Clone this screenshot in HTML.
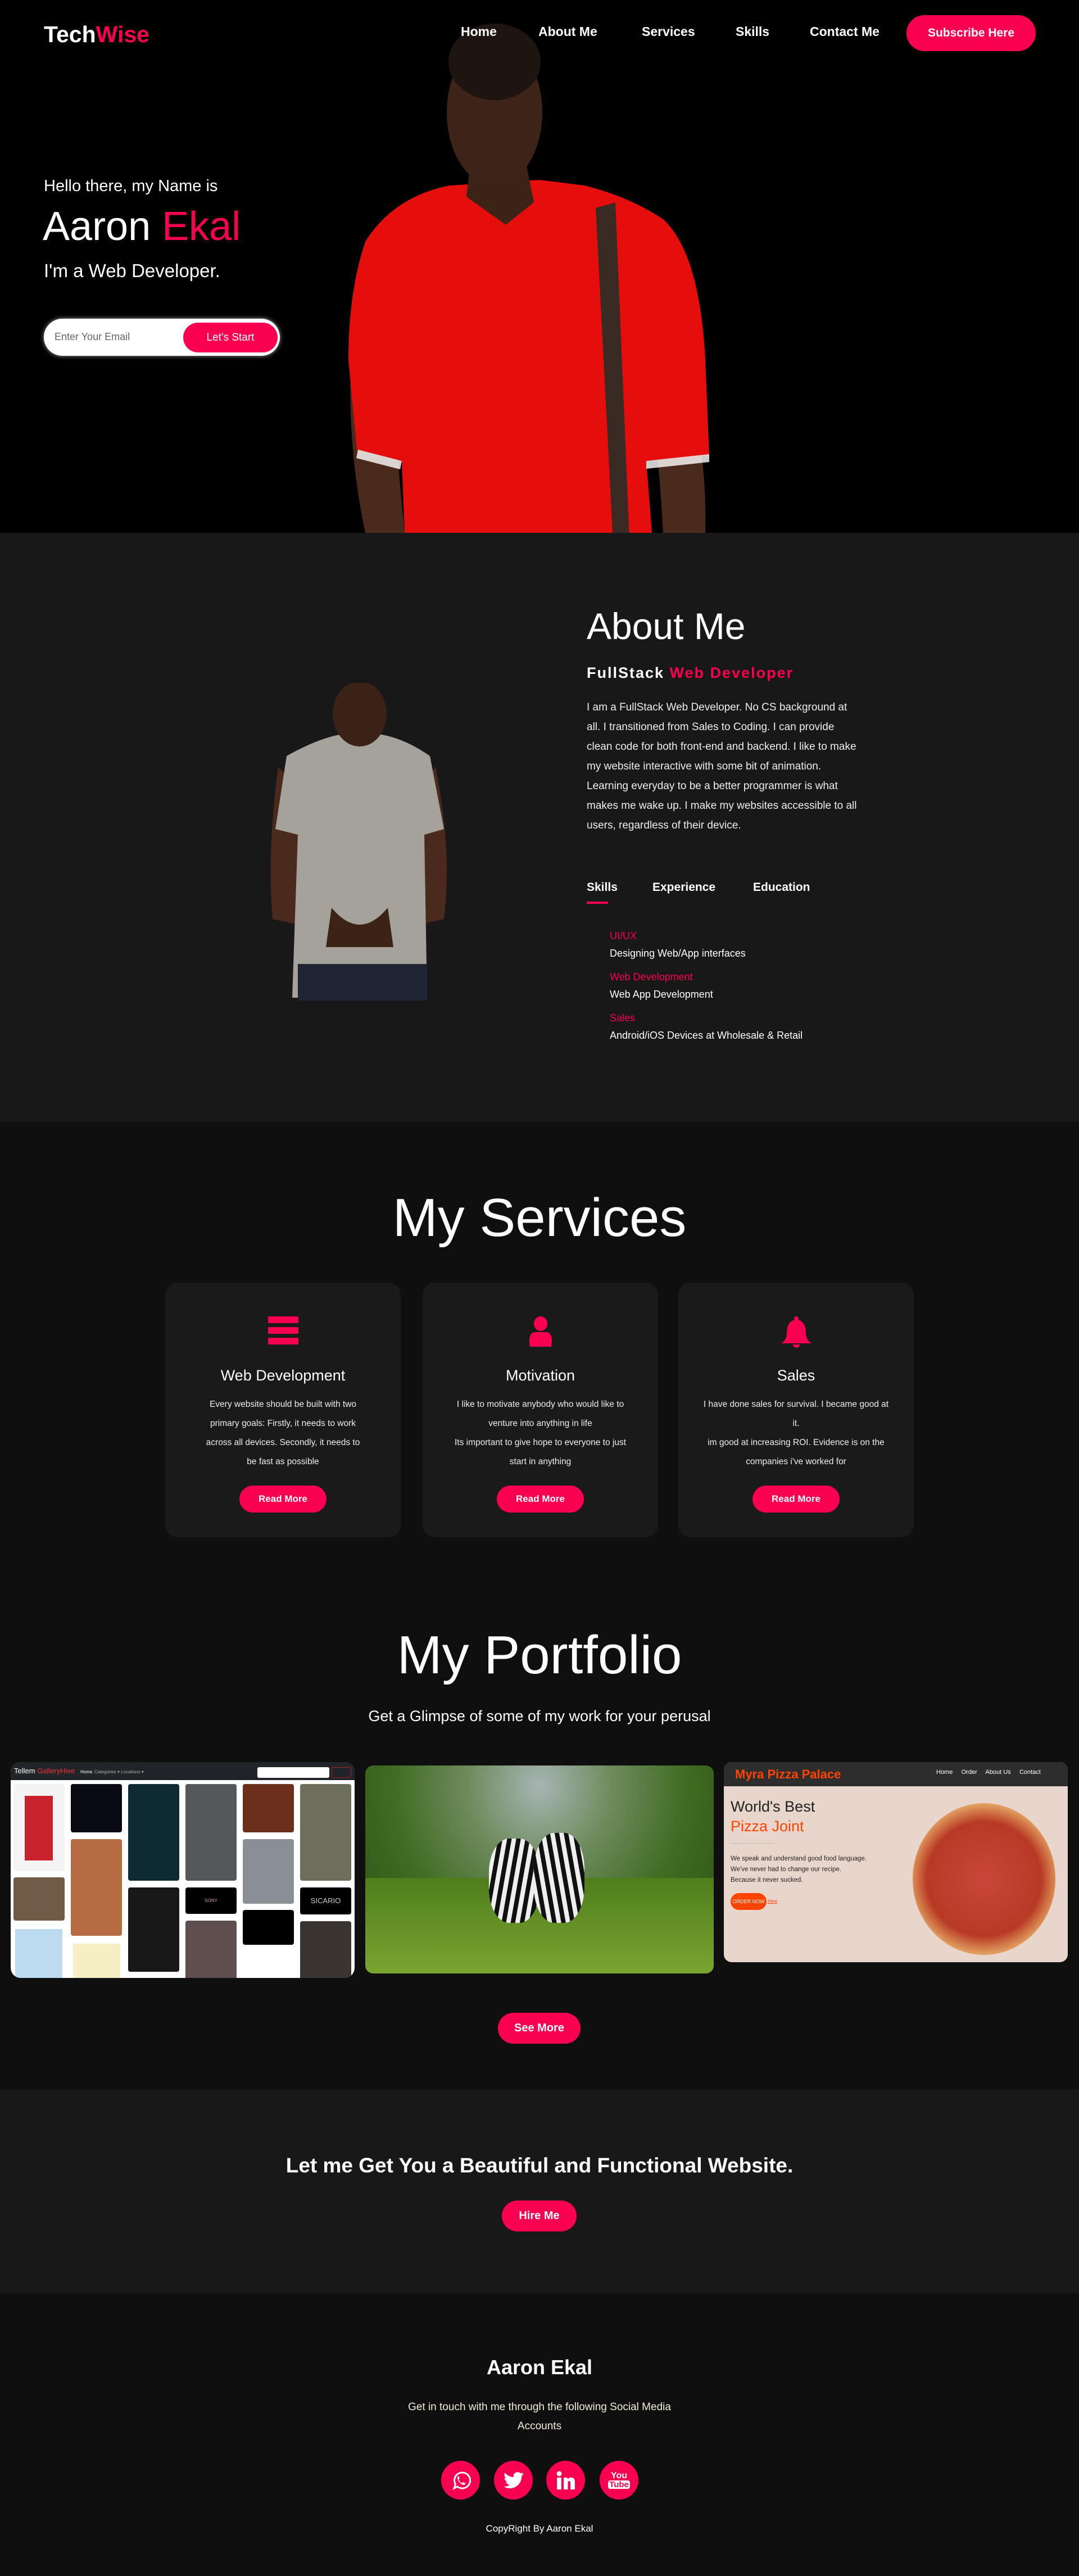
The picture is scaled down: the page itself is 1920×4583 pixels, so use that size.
<!DOCTYPE html>
<html><head><meta charset="utf-8">
<style>
*{margin:0;padding:0;box-sizing:border-box}
body{width:1920px;height:4583px;background:#0f0f0f;font-family:"Liberation Sans",sans-serif;color:#fff;position:relative;overflow:hidden}
.a{position:absolute}
.red{color:#fa0050}
.btn{position:absolute;background:#fa0050;color:#fff;font-weight:bold;border-radius:30px;display:flex;align-items:center;justify-content:center}
.c{text-align:center}
.card{position:absolute;background:#1a1a1a;border-radius:22px;top:2282px;height:453px;width:419px}
.card h3{position:absolute;top:150px;width:100%;text-align:center;font-size:27px;font-weight:normal}
.card p{position:absolute;top:200px;left:62px;right:62px;text-align:center;font-size:15.5px;line-height:34px;color:#eee}
.card .btn{top:361px;left:132px;width:155px;height:48px;font-size:17px}
.card svg{position:absolute;left:50%;transform:translateX(-50%);top:60px}
.soc{position:absolute;top:4378px;width:69px;height:69px;border-radius:50%;background:#fa0050;display:flex;align-items:center;justify-content:center}
</style></head><body>

<!-- HERO -->
<div class="a" style="left:0;top:0;width:1920px;height:948px;background:#000"></div>
<svg class="a" style="left:0;top:0" width="1920" height="948">
  <path d="M630 560 Q610 760 650 948 L720 948 Q700 760 700 600Z" fill="#4a2a1c"/>
  <path d="M1190 560 Q1260 760 1255 948 L1180 948 Q1170 760 1140 600Z" fill="#4a2a1c"/>
  <path d="M800 330 Q700 350 650 430 Q620 520 620 640 L635 800 L715 820 L720 948 L1160 948 L1150 820 L1262 810 L1255 640 Q1245 450 1180 390 Q1120 350 1040 330 L960 320 Z" fill="#e60d0d"/>
  <path d="M1060 370 L1095 360 L1120 960 L1090 948 Z" fill="#3a2a24"/>
  <path d="M637 800 L715 820 L712 835 L634 815Z" fill="#fff" opacity=".8"/>
  <path d="M1150 820 L1262 808 L1262 822 L1150 834Z" fill="#fff" opacity=".8"/>
  <path d="M840 260 L930 260 L950 360 L900 400 L830 350Z" fill="#3b2316"/>
  <ellipse cx="880" cy="200" rx="85" ry="130" fill="#3e2418"/>
  <ellipse cx="880" cy="110" rx="82" ry="68" fill="#1e1410"/>
</svg>
<div class="a" style="left:78px;top:38px;font-size:41px;font-weight:bold">Tech<span class="red">Wise</span></div>
<div class="a" style="left:820px;top:43px;font-size:23px;font-weight:bold">Home</div>
<div class="a" style="left:958px;top:43px;font-size:23px;font-weight:bold">About Me</div>
<div class="a" style="left:1142px;top:43px;font-size:23px;font-weight:bold">Services</div>
<div class="a" style="left:1309px;top:43px;font-size:23px;font-weight:bold">Skills</div>
<div class="a" style="left:1441px;top:43px;font-size:23px;font-weight:bold">Contact Me</div>
<div class="btn" style="left:1613px;top:27px;width:230px;height:64px;font-size:21px;border-radius:32px">Subscribe Here</div>
<div class="a" style="left:78px;top:315px;font-size:29px">Hello there, my Name is</div>
<div class="a" style="left:76px;top:362px;font-size:72px">Aaron <span class="red">Ekal</span></div>
<div class="a" style="left:78px;top:463px;font-size:33px">I'm a Web Developer.</div>
<div class="a" style="left:78px;top:567px;width:420px;height:66px;border-radius:33px;background:#fff;box-shadow:0 0 8px #999"></div>
<div class="a" style="left:97px;top:589px;font-size:18px;color:#666">Enter Your Email</div>
<div class="btn" style="left:326px;top:574px;width:168px;height:53px;font-size:19px;font-weight:normal">Let's Start</div>

<!-- ABOUT -->
<div class="a" style="left:0;top:948px;width:1920px;height:1048px;background:#181818"></div>
<svg class="a" style="left:470px;top:1215px" width="340" height="570">
  <path d="M25 150 Q5 300 15 420 L60 430 L80 200Z" fill="#4a2a1c"/>
  <path d="M305 150 Q335 300 320 420 L275 430 L260 200Z" fill="#4a2a1c"/>
  <path d="M40 130 Q120 85 170 90 Q230 85 295 130 L320 260 L285 270 L290 560 L50 560 L60 270 L20 260Z" fill="#a5a29b"/>
  <rect x="60" y="500" width="230" height="65" fill="#1f2533"/>
  <path d="M120 400 Q170 460 220 400 L230 470 L110 470Z" fill="#3b2316"/>
  <ellipse cx="170" cy="55" rx="48" ry="58" fill="#3a2216"/>
</svg>
<div class="a" style="left:1044px;top:1076px;font-size:66px">About Me</div>
<div class="a" style="left:1044px;top:1182px;font-size:27px;font-weight:bold;letter-spacing:2px">FullStack <span class="red">Web Developer</span></div>
<div class="a" style="left:1044px;top:1241px;width:490px;font-size:19px;line-height:35px;color:#eee">I am a FullStack Web Developer. No CS background at all. I transitioned from Sales to Coding. I can provide clean code for both front-end and backend. I like to make my website interactive with some bit of animation. Learning everyday to be a better programmer is what makes me wake up. I make my websites accessible to all users, regardless of their device.</div>
<div class="a" style="left:1044px;top:1567px;font-size:21px;font-weight:bold">Skills</div>
<div class="a" style="left:1161px;top:1567px;font-size:21px;font-weight:bold">Experience</div>
<div class="a" style="left:1340px;top:1567px;font-size:21px;font-weight:bold">Education</div>
<div class="a" style="left:1044px;top:1604px;width:38px;height:4px;background:#fa0050"></div>
<div class="a" style="left:1085px;top:1650px;font-size:18px;line-height:30.5px">
<div class="red">UI/UX</div><div>Designing Web/App interfaces</div>
<div class="red" style="margin-top:12px">Web Development</div><div>Web App Development</div>
<div class="red" style="margin-top:12px">Sales</div><div>Android/iOS Devices at Wholesale &amp; Retail</div>
</div>

<!-- SERVICES -->
<div class="a c" style="left:0;top:2112px;width:1920px;font-size:96px">My Services</div>
<div class="card" style="left:294px">
  <svg width="54" height="50" viewBox="0 0 54 50"><rect x="0" y="0" width="54" height="12" rx="2" fill="#fa0050"/><rect x="0" y="19" width="54" height="12" rx="2" fill="#fa0050"/><rect x="0" y="38" width="54" height="12" rx="2" fill="#fa0050"/></svg>
  <h3>Web Development</h3>
  <p>Every website should be built with two primary goals: Firstly, it needs to work across all devices. Secondly, it needs to be fast as possible</p>
  <div class="btn">Read More</div></div>
<div class="card" style="left:752px">
  <svg width="46" height="54" viewBox="0 0 46 54"><ellipse cx="23" cy="13" rx="12" ry="13" fill="#fa0050"/><path d="M4 54 Q0 30 12 28 L34 28 Q46 30 42 54Z" fill="#fa0050"/></svg>
  <h3>Motivation</h3>
  <p style="left:40px;right:40px">I like to motivate anybody who would like to venture into anything in life<br>Its important to give hope to everyone to just start in anything</p>
  <div class="btn">Read More</div></div>
<div class="card" style="left:1207px">
  <svg width="58" height="60" viewBox="0 0 58 60"><circle cx="29" cy="4" r="4" fill="#fa0050"/><path d="M29 5 Q12 8 12 30 Q12 42 2 48 L56 48 Q46 42 46 30 Q46 8 29 5Z" fill="#fa0050"/><path d="M22 50 Q29 62 36 50Z" fill="#fa0050"/></svg>
  <h3>Sales</h3>
  <p style="left:40px;right:40px">I have done sales for survival. I became good at it.<br>im good at increasing ROI. Evidence is on the companies i've worked for</p>
  <div class="btn">Read More</div></div>

<!-- PORTFOLIO -->
<div class="a c" style="left:0;top:2890px;width:1920px;font-size:96px">My Portfolio</div>
<div class="a c" style="left:0;top:3038px;width:1920px;font-size:27px">Get a Glimpse of some of my work for your perusal</div>

<div class="a" style="left:19px;top:3135px;width:612px;height:384px;background:#fff;border-radius:18px;overflow:hidden">
  <div class="a" style="left:0;top:0;width:612px;height:32px;background:#212529"></div>
  <div class="a" style="left:6px;top:8px;font-size:13px">Tellem <span style="color:#e33">GalleryHive</span> <span style="font-size:8px;margin-left:6px">Home</span> <span style="font-size:8px;color:#aaa">Categories ▾ Locations ▾</span></div>
  <div class="a" style="left:439px;top:9px;width:128px;height:19px;background:#fff;border-radius:3px"></div>
  <div class="a" style="left:571px;top:9px;width:35px;height:19px;border:1px solid #a22;border-radius:3px"></div>
  <div class="a" style="left:5px;top:39px;width:91px;height:155px;background:#f4f4f4;border-radius:4px"></div>
  <div class="a" style="left:25px;top:60px;width:50px;height:115px;background:#c8232c"></div>
  <div class="a" style="left:5px;top:205px;width:91px;height:77px;background:#6f5b48;border-radius:4px"></div>
  <div class="a" style="left:8px;top:297px;width:84px;height:110px;background:#bcdaf0"></div>
  <div class="a" style="left:107px;top:39px;width:91px;height:86px;background:#0a0a12;border-radius:4px"></div>
  <div class="a" style="left:107px;top:137px;width:91px;height:172px;background:#b76b43;border-radius:4px"></div>
  <div class="a" style="left:111px;top:323px;width:84px;height:100px;background:#f6efc3"></div>
  <div class="a" style="left:209px;top:39px;width:91px;height:172px;background:#0e2a33;border-radius:4px"></div>
  <div class="a" style="left:209px;top:223px;width:91px;height:150px;background:#181818;border-radius:4px"></div>
  <div class="a" style="left:311px;top:39px;width:91px;height:172px;background:#55585a;border-radius:4px"></div>
  <div class="a" style="left:311px;top:223px;width:91px;height:47px;background:#000;border-radius:4px;color:#c9a;font-size:8px;text-align:center;line-height:47px">SONY</div>
  <div class="a" style="left:311px;top:282px;width:91px;height:190px;background:#5e4e4e;border-radius:4px"></div>
  <div class="a" style="left:413px;top:39px;width:91px;height:86px;background:#6b2f1b;border-radius:4px"></div>
  <div class="a" style="left:413px;top:137px;width:91px;height:115px;background:#8a8f96;border-radius:4px"></div>
  <div class="a" style="left:413px;top:263px;width:91px;height:62px;background:#000;border-radius:4px"></div>
  <div class="a" style="left:515px;top:39px;width:91px;height:172px;background:#6d6e5c;border-radius:4px"></div>
  <div class="a" style="left:515px;top:223px;width:91px;height:48px;background:#000;border-radius:4px;color:#ccc;font-size:13px;text-align:center;line-height:48px">SICARIO</div>
  <div class="a" style="left:515px;top:283px;width:91px;height:135px;background:#3a3530;border-radius:4px"></div>
</div>

<div class="a" style="left:650px;top:3141px;width:620px;height:370px;border-radius:14px;overflow:hidden;background:radial-gradient(ellipse at 50% 10%,#a7b5b3 0%,#6d8a5b 30%,#3f6b22 60%,#2b4d12 100%)">
  <div class="a" style="left:0;top:200px;width:620px;height:170px;background:linear-gradient(#4f7d1c,#7aa531)"></div>
  <div class="a" style="left:220px;top:130px;width:90px;height:150px;border-radius:40%;background:repeating-linear-gradient(100deg,#111 0 8px,#eee 8px 16px)"></div>
  <div class="a" style="left:300px;top:120px;width:90px;height:160px;border-radius:40%;background:repeating-linear-gradient(80deg,#111 0 8px,#eee 8px 16px)"></div>
</div>

<div class="a" style="left:1288px;top:3135px;width:612px;height:356px;border-radius:14px;overflow:hidden;background:#e8d6cc">
  <div class="a" style="left:0;top:0;width:612px;height:43px;background:#2e2d2e"></div>
  <div class="a" style="left:20px;top:9px;font-size:22px;font-weight:bold;color:#ff4300">Myra Pizza Palace</div>
  <div class="a" style="left:378px;top:12px;font-size:11px">Home &nbsp;&nbsp;&nbsp; Order &nbsp;&nbsp;&nbsp; About Us &nbsp;&nbsp;&nbsp; Contact</div>
  <div class="a" style="left:12px;top:62px;font-size:27px;color:#222;line-height:35px">World's Best<br><span style="color:#ff4300">Pizza Joint</span></div>
  <div class="a" style="left:12px;top:144px;width:78px;height:1px;background:#bbb"></div>
  <div class="a" style="left:12px;top:163px;font-size:11.5px;color:#222;line-height:19px">We speak and understand good food language.<br>We've never had to change our recipe.<br>Because it never sucked.</div>
  <div class="a" style="left:12px;top:233px;width:64px;height:30px;border-radius:15px;background:#ff4300;font-size:9px;text-align:center;line-height:30px">ORDER NOW</div>
  <div class="a" style="left:78px;top:243px;font-size:8px;color:#ff4300;text-decoration:underline">Here</div>
  <div class="a" style="left:336px;top:73px;width:254px;height:270px;border-radius:50%;background:radial-gradient(circle,#c9473a 0%,#b83a25 55%,#e2a060 72%,#dcb27c 100%)"></div>
</div>
<div class="btn" style="left:886px;top:3581px;width:147px;height:55px;font-size:20px">See More</div>

<!-- CTA -->
<div class="a" style="left:0;top:3717px;width:1920px;height:363px;background:#181818"></div>
<div class="a c" style="left:0;top:3832px;width:1920px;font-size:37px;font-weight:bold">Let me Get You a Beautiful and Functional Website.</div>
<div class="btn" style="left:893px;top:3915px;width:133px;height:55px;font-size:20px">Hire Me</div>

<!-- FOOTER -->
<div class="a c" style="left:0;top:4191px;width:1920px;font-size:36px;font-weight:bold">Aaron Ekal</div>
<div class="a c" style="left:680px;top:4266px;width:560px;font-size:19px;line-height:34px;color:#f3ecd8">Get in touch with me through the following Social Media<br>Accounts</div>
<div class="soc" style="left:785px"><svg width="36" height="36" viewBox="0 0 36 36"><path d="M6 32 L8.5 25 A14 14 0 1 1 12 29 Z" fill="none" stroke="#fff" stroke-width="3"/><path d="M13 11 Q11 13 13 18 Q17 25 23 26 Q26 26 26 23 L22 21 L20 23 Q16 21 14 16 L16 14 L14 10Z" fill="#fff"/></svg></div>
<div class="soc" style="left:879px"><svg width="36" height="32" viewBox="0 0 24 20"><path d="M24 2.3a10 10 0 0 1-2.8.8 5 5 0 0 0 2.2-2.7 10 10 0 0 1-3.1 1.2A4.9 4.9 0 0 0 11.9 6 14 14 0 0 1 1.7.8a4.9 4.9 0 0 0 1.5 6.6A4.9 4.9 0 0 1 1 6.8a4.9 4.9 0 0 0 3.9 4.8 5 5 0 0 1-2.2.1 4.9 4.9 0 0 0 4.6 3.4A9.9 9.9 0 0 1 0 17.1 14 14 0 0 0 7.5 19.3c9 0 14-7.5 14-14v-.6A10 10 0 0 0 24 2.3z" fill="#fff"/></svg></div>
<div class="soc" style="left:972px"><svg width="34" height="34" viewBox="0 0 34 34"><circle cx="5" cy="5" r="4.5" fill="#fff"/><rect x="1" y="12" width="8" height="21" fill="#fff"/><path d="M13 12 H20 V15 Q23 11 28 12 Q33 13 33 20 V33 H25 V21 Q25 18 22.5 18 Q20.5 18 20.5 21 V33 H13Z" fill="#fff"/></svg></div>
<div class="soc" style="left:1067px;flex-direction:column;line-height:1"><span style="font-size:16px;font-weight:bold">You</span><span style="font-size:15px;font-weight:bold;background:#fff;color:#fa0050;border-radius:4px;padding:0 2px">Tube</span></div>
<div class="a c" style="left:0;top:4489px;width:1920px;font-size:17px">CopyRight By Aaron Ekal</div>
</body></html>
